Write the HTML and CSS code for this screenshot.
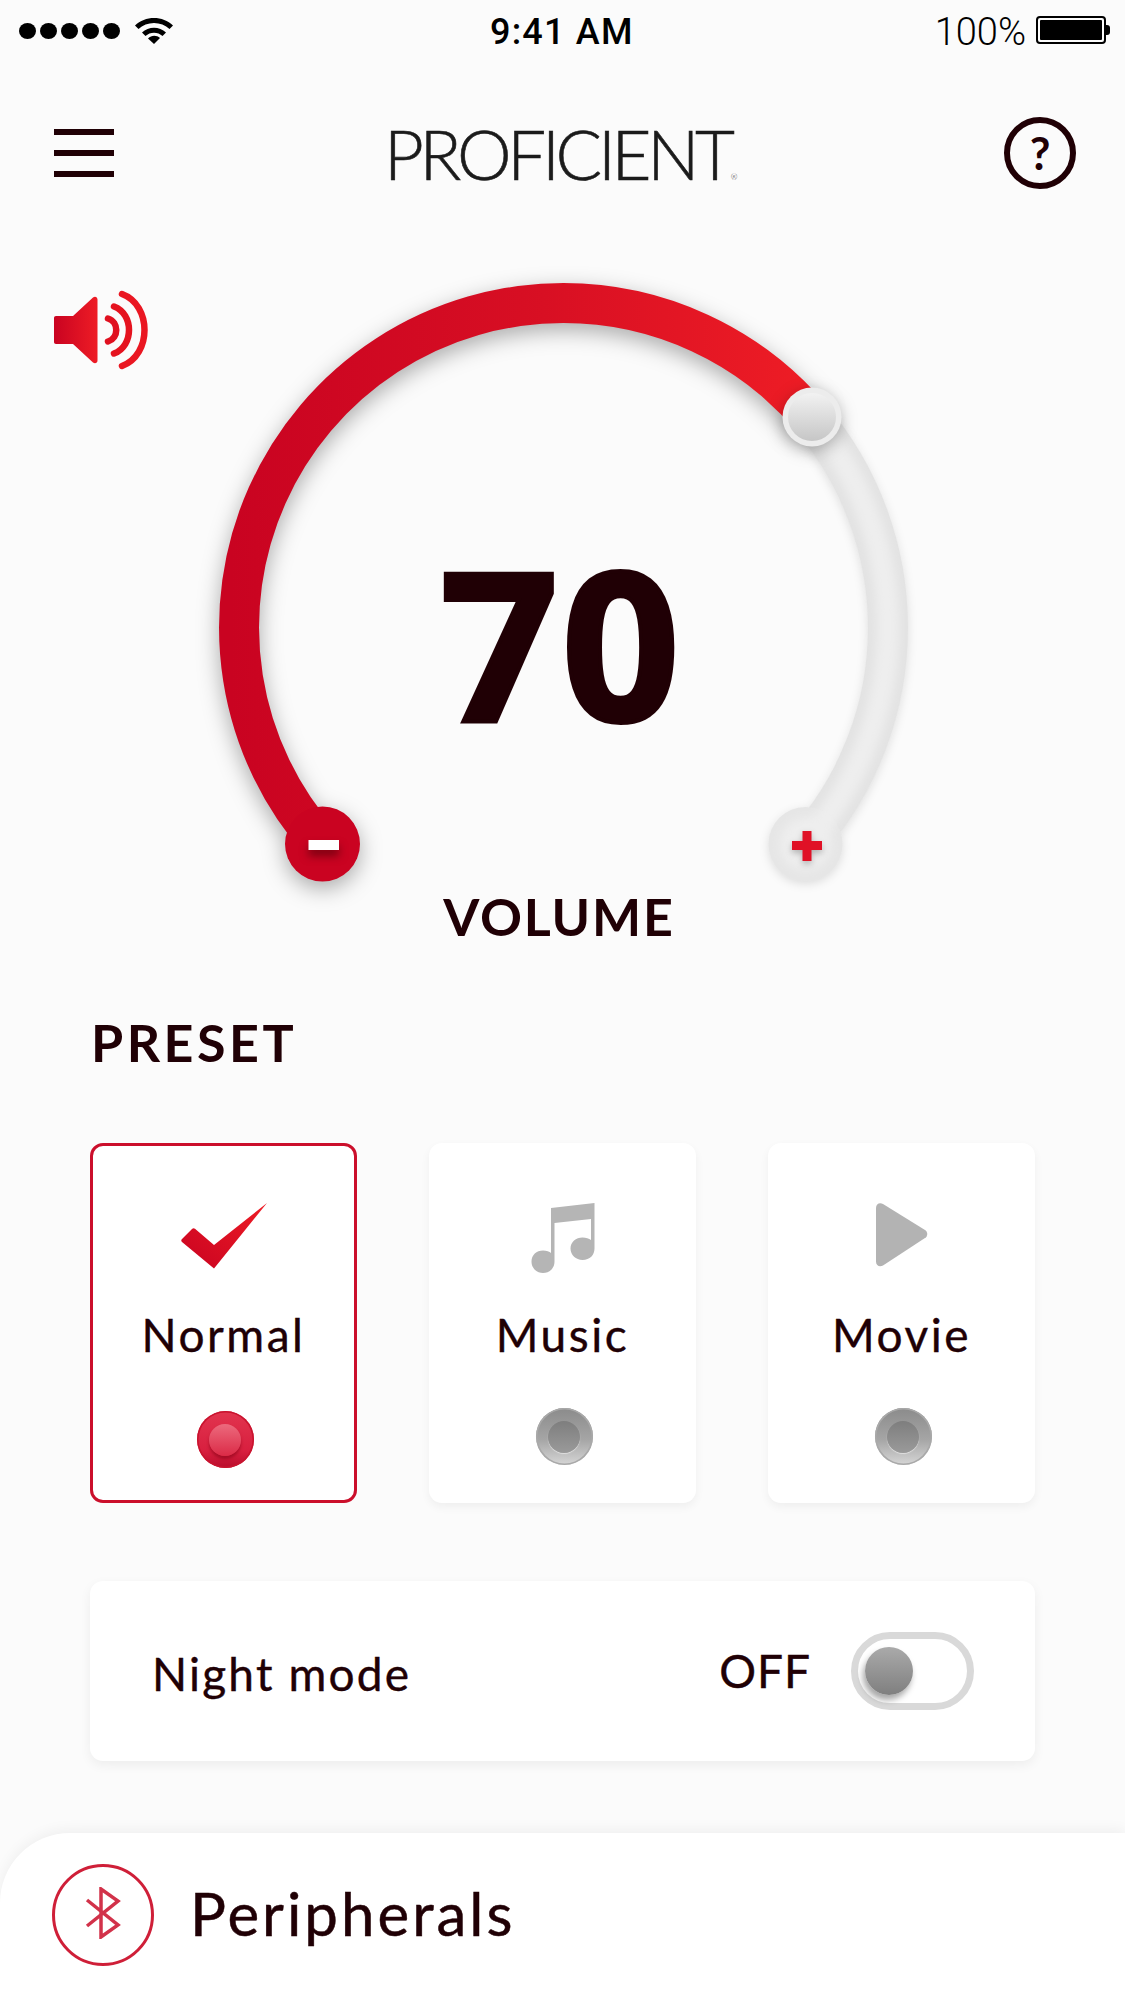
FILE: index.html
```
<!DOCTYPE html>
<html lang="en">
<head>
<meta charset="utf-8">
<title>Proficient</title>
<link rel="stylesheet" href="styles.css">
</head>
<body>
<main class="app">
  <header class="status">
    <div class="status-left">
      <span class="signal"><i></i><i></i><i></i><i></i><i></i></span>
      <svg class="wifi" viewBox="0 0 40 28"><path d="M1 9.5C11 -0.5 29 -0.5 39 9.5L35.5 13C27.5 5 12.500 5 4.500 13Z"/><path d="M8 16.500C14.500 10 25.500 10 32 16.500L28.500 20C24 15.500 16 15.500 11.500 20Z"/><path d="M14 22.500C17.500 19 22.500 19 26 22L20 28Z"/></svg>
    </div>
    <div class="clock">9:41 AM</div>
    <div class="status-right">
      <span class="pct">100%</span>
      <span class="battery"><span class="battery-fill"></span></span>
      <span class="battery-cap"></span>
    </div>
  </header>

  <nav class="nav">
    <div class="menu"><i></i><i></i><i></i></div>
    <div class="logo">PROFICIENT<span class="tm">®</span></div>
    <div class="help">?</div>
  </nav>

  <section class="gauge">
    <svg class="dial" viewBox="0 0 1125 650" width="1125" height="650">
      <defs>
        <linearGradient id="redArc" gradientUnits="userSpaceOnUse" x1="230" y1="0" x2="800" y2="0">
          <stop offset="0" stop-color="#c90321"/>
          <stop offset=".55" stop-color="#d80f23"/>
          <stop offset="1" stop-color="#ed1c25"/>
        </linearGradient>
        <linearGradient id="knobFace" x1="0" y1="0" x2="0" y2="1">
          <stop offset="0" stop-color="#f2f2f2"/>
          <stop offset="1" stop-color="#c6c6c6"/>
        </linearGradient>
        <filter id="soft" x="-20%" y="-20%" width="140%" height="140%"><feGaussianBlur stdDeviation="5"/></filter>
      </defs>
      <g class="track">
        <path d="M811.100 177.700A324.500 324.500 0 0 1 888 387.500A324.500 324.500 0 0 1 805 604.200" fill="none" stroke="#e3e3e3" stroke-width="40"/>
        <circle cx="805.500" cy="604" r="37" fill="#e6e6e6"/>
        <path d="M811.100 177.700A324.500 324.500 0 0 1 888 387.500A324.500 324.500 0 0 1 805 604.200" fill="none" stroke="#eeeeee" stroke-width="22" filter="url(#soft)"/>
        <circle cx="805.500" cy="604" r="26" fill="#eeeeee" filter="url(#soft)"/>
      </g>
      <g class="lit">
        <path d="M322 604.200A324.500 324.500 0 0 1 563.500 63A324.500 324.500 0 0 1 811.100 177.700" fill="none" stroke="url(#redArc)" stroke-width="40"/>
        <circle cx="322.500" cy="604" r="37.500" fill="#ca0321"/>
      </g>
      <rect class="glyph-shadow-dark" x="308.500" y="600" width="30.500" height="10" fill="#ffffff"/>
      <path class="glyph-shadow" d="M802.500 591H811.500V601H822V610H811.500V621H802.500V610H792V601H802.500Z" fill="#e01126"/>
      <g class="knob">
        <circle cx="812" cy="177" r="29.500" fill="#ececec"/>
        <circle cx="812" cy="177" r="24" fill="url(#knobFace)"/>
      </g>
    </svg>
    <svg class="speaker" viewBox="0 0 94 80">
      <defs>
        <linearGradient id="spk" x1="0" y1="0" x2="1" y2="0">
          <stop offset="0" stop-color="#c90321"/>
          <stop offset="1" stop-color="#ee1c25"/>
        </linearGradient>
      </defs>
      <path fill="url(#spk)" d="M2 26H19L39 7.500C41 5.800 43.500 7 43.500 9.500V70.500C43.500 73 41 74.200 39 72.500L19 54H2C.8 54 0 53.200 0 52V28C0 26.800 .8 26 2 26Z"/>
      <g fill="none" stroke-width="6.500" stroke-linecap="round">
        <path d="M54 28.500C65 32 65 48 54 51.500" stroke="#e0101f"/>
        <path d="M60 16.500C80 24 80 56 60 63.500" stroke="#e5131f"/>
        <path d="M68 4C98 15 98 65 68 76" stroke="#ea1722"/>
      </g>
    </svg>
    <div class="value">70</div>
  </section>

  <h2 class="volume">VOLUME</h2>
  <h2 class="preset-title">PRESET</h2>

  <section class="presets">
    <article class="card card-on">
      <div class="card-icon">
        <svg width="86" height="66" viewBox="0 0 86 66"><defs><linearGradient id="chk" x1="0" y1="1" x2="1" y2="0"><stop offset="0" stop-color="#c90321"/><stop offset="1" stop-color="#ee1c25"/></linearGradient></defs><path fill="url(#chk)" d="M1 36L11 26C12 25 13 25 14 25.800L33 42L86 0L33 65.500L1 39C0 38 0 37 1 36Z"/></svg>
      </div>
      <div class="card-label">Normal</div>
      <div class="led led-on"><span></span></div>
    </article>
    <article class="card">
      <div class="card-icon">
        <svg width="64" height="70" viewBox="0 0 64 70"><path fill="#b5b5b5" d="M12 70C5.500 70 .5 65 .5 58.500C.5 52 5.500 47.500 12 47.500C15.500 47.500 18.500 48.500 20 50V5L63.500 0V45.500C63.500 52 59 57 51.500 57C45 57 39.500 52 39.500 45.500C39.500 39 45 34.500 51.500 34.500C55 34.500 58 35.500 60 37V16L23.500 20V58.500C23.500 65 19 70 12 70Z"/></svg>
      </div>
      <div class="card-label">Music</div>
      <div class="led"><span></span></div>
    </article>
    <article class="card">
      <div class="card-icon">
        <svg width="52" height="64" viewBox="0 0 52 64"><path fill="#b3b3b3" d="M0 5C0 1 3.500 -1 7 1L49 27C52 29 52 33 49 35L7 62.500C3.500 64.500 0 62.500 0 58.500Z"/></svg>
      </div>
      <div class="card-label">Movie</div>
      <div class="led"><span></span></div>
    </article>
  </section>

  <section class="night">
    <span class="night-label">Night mode</span>
    <div class="night-control">
      <span class="night-state">OFF</span>
      <span class="toggle"><span class="toggle-knob"></span></span>
    </div>
  </section>

  <footer class="sheet">
    <span class="bt">
      <svg class="bt-glyph" width="36" height="52" viewBox="0 0 36 52"><path fill="none" stroke="#d2324a" stroke-width="3.500" d="M2 13L33 38L16 50V2L33 14L2 39"/></svg>
    </span>
    <span class="sheet-title">Peripherals</span>
  </footer>
</main>
</body>
</html>
```
FILE: styles.css
```
* { box-sizing: border-box; }
html, body { margin: 0; padding: 0; }
body { background: #fbfbfb; color: #200005; font-family: "Lato", "Liberation Sans", sans-serif; }
.app { width: 1125px; height: 2001px; overflow: hidden; display: flex; flex-direction: column; }

.status { height: 60px; flex: none; padding: 16px 15px 0 19px; display: flex; justify-content: space-between; align-items: flex-start; color: #000; font-family: "Roboto", "Liberation Sans", sans-serif; position: relative; }
.status-left { display: flex; align-items: flex-start; gap: 14px; }
.signal { display: flex; gap: 4px; padding-top: 7px; }
.signal i { width: 17px; height: 16px; border-radius: 50%; background: #000; display: block; }
.wifi { width: 40px; height: 28px; fill: #000; }
.clock { position: absolute; left: 490px; top: 12px; font-size: 36px; line-height: 40px; font-weight: 500; letter-spacing: 1.200px; }
.status-right { display: flex; align-items: center; height: 28px; }
.pct { font-size: 38px; line-height: 28px; margin-right: 10px; padding-top: 3px; font-weight: 300; }
.battery { width: 70px; height: 28px; border: 2px solid #000; border-radius: 4px; padding: 2px; display: block; }
.battery-fill { display: block; height: 100%; background: #000; border-radius: 1px; }
.battery-cap { width: 4px; height: 10px; background: #000; border-radius: 0 3px 3px 0; }

.nav { margin-top: 57px; height: 72px; flex: none; padding: 0 49px 0 54px; display: flex; justify-content: space-between; align-items: center; position: relative; }
.menu { width: 60px; height: 48px; display: flex; flex-direction: column; justify-content: space-between; }
.menu i { display: block; height: 6px; background: #200005; }
.logo { position: absolute; left: 384px; top: 3px; font-size: 69px; line-height: 68px; font-weight: 300; letter-spacing: -4.300px; color: #1b1b1b; -webkit-text-stroke: .6px #1b1b1b; white-space: nowrap; }
.tm { font-size: 8px; letter-spacing: 0; -webkit-text-stroke: 0; }
.help { width: 72px; height: 72px; border: 6px solid #200005; border-radius: 50%; display: flex; align-items: center; justify-content: center; font-size: 45px; font-weight: 700; line-height: 1; }

.gauge { margin-top: 51px; height: 650px; position: relative; flex: none; }
.dial { display: block; overflow: visible; }
.track { filter: drop-shadow(0 3px 5px rgba(0,0,0,.12)); }
.lit { filter: drop-shadow(0 7px 11px rgba(0,0,0,.32)); }
.knob { filter: drop-shadow(0 5px 8px rgba(0,0,0,.28)); }
.glyph-shadow-dark { filter: drop-shadow(0 6px 4px rgba(90,0,10,.7)); }
.glyph-shadow { filter: drop-shadow(0 3px 3px rgba(0,0,0,.25)); }
.speaker { position: absolute; left: 54px; top: 50px; width: 94px; height: 80px; }
.value { position: absolute; left: 0; top: 291px; width: 1125px; padding-right: 2px; text-align: center; font-family: "Open Sans", sans-serif; font-weight: 700; font-size: 207px; line-height: 220px; letter-spacing: 3px; -webkit-text-stroke: 4px #200005; }

.volume, .preset-title { margin: 0; font-weight: 700; font-size: 52px; line-height: 60px; }
.volume { text-align: center; margin-top: -4px; padding-right: 7px; letter-spacing: 1.800px; }
.preset-title { margin-top: 66px; padding-left: 91px; letter-spacing: 3.500px; }

.presets { margin-top: 71px; padding: 0 90px; display: grid; grid-template-columns: repeat(3, 267px); column-gap: 72px; }
.card { height: 360px; background: #fff; border: 3px solid transparent; border-radius: 13px; box-shadow: 0 4px 10px rgba(0,0,0,.05); display: flex; flex-direction: column; align-items: center; padding-top: 57px; }
.card-on { border-color: #cb0f2b; box-shadow: none; }
.card-icon { height: 70px; display: flex; align-items: flex-start; justify-content: center; }
.card-label { margin-top: 32px; font-size: 46px; line-height: 60px; letter-spacing: 2.500px; font-weight: 400; -webkit-text-stroke: .4px #200005; }
.led { margin-top: 43px; margin-left: 3px; width: 57px; height: 57px; border-radius: 50%; background: linear-gradient(#8b8b8b, #a5a5a5 55%, #d6d6d6); box-shadow: inset 0 0 0 1.500px #a9a9a9; display: flex; align-items: center; justify-content: center; }
.led span { width: 32px; height: 32px; border-radius: 50%; background: linear-gradient(#7e7e7e, #9a9a9a); box-shadow: 0 1px 1px #e0e0e0; }
.led-on { margin-top: 46px; background: linear-gradient(#e2354f, #d81f3f 70%, #b80d2c); box-shadow: inset 0 0 0 1.500px #c9142f; }
.led-on span { background: linear-gradient(#ec6a7d, #db2b47); box-shadow: 0 3px 3px rgba(130,0,20,.5); }

.night { margin: 78px 90px 0; height: 180px; width: 945px; background: #fff; border-radius: 13px; box-shadow: 0 4px 12px rgba(0,0,0,.06); display: flex; justify-content: space-between; align-items: center; padding: 0 61px 0 62px; flex: none; }
.night-label { font-size: 46px; line-height: 60px; letter-spacing: 2.200px; -webkit-text-stroke: .4px #200005; padding-top: 6px; }
.night-control { display: flex; align-items: center; gap: 40px; }
.night-state { font-size: 46px; line-height: 60px; letter-spacing: 1px; -webkit-text-stroke: .4px #200005; }
.toggle { width: 123px; height: 78px; border: 7px solid #d9d9d9; border-radius: 39px; background: #fff; display: flex; align-items: center; padding-left: 7px; }
.toggle-knob { width: 48px; height: 48px; border-radius: 50%; background: linear-gradient(#aaaaaa, #7f7f7f); box-shadow: -2px 5px 6px rgba(0,0,0,.35); }

.sheet { margin-top: 72px; height: 200px; background: #fff; border-radius: 70px 0 0 0; box-shadow: 0 -3px 14px rgba(0,0,0,.05); display: flex; align-items: flex-start; padding: 31px 0 0 52px; gap: 36px; flex: none; }
.bt { width: 102px; height: 102px; border: 3px solid #cf1f38; border-radius: 50%; display: flex; align-items: center; justify-content: center; }
.bt-glyph { margin-top: -4px; }
.sheet-title { font-size: 60px; line-height: 70px; letter-spacing: 3px; -webkit-text-stroke: .5px #200005; margin-top: 14px; }
```
